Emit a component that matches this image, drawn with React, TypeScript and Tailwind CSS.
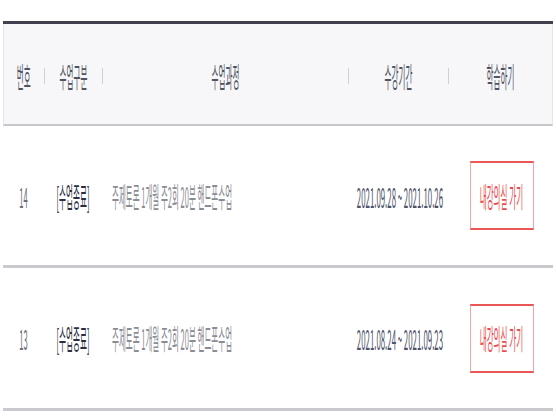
const rows = [
  { no: "14", period: "2021.09.28 ~ 2021.10.26" },
  { no: "13", period: "2021.08.24 ~ 2021.09.23" },
];

const font = "font-['Noto_Sans_CJK_KR','Noto_Sans',sans-serif]";

function Squish({ children, className = "" }: { children: React.ReactNode; className?: string }) {
  return (
    <span className={`inline-block whitespace-nowrap text-[28px] leading-none scale-x-[0.27] ${className}`}>
      {children}
    </span>
  );
}

export default function App() {
  return (
    <div className={`w-[556px] h-[416px] bg-white pt-[21px] px-[3px] overflow-hidden ${font}`}>
      <div className="border-t-[3px] border-[#40404f]">
        {/* header */}
        <div className="flex items-center h-[102px] pt-1 bg-[#f7f7fa] border-b-2 border-[#c8c8cc] border-x border-x-[#e6e6ea] text-[#4f5360]">
          <div className="w-[40px] flex justify-center"><Squish>번호</Squish></div>
          <div className="w-px h-4 bg-[#cfcfd4]" />
          <div className="w-[57px] flex justify-center"><Squish>수업구분</Squish></div>
          <div className="w-px h-4 bg-[#cfcfd4]" />
          <div className="w-[247px] flex justify-center"><Squish>수업과정</Squish></div>
          <div className="w-px h-4 bg-[#cfcfd4]" />
          <div className="w-[99px] flex justify-center"><Squish>수강기간</Squish></div>
          <div className="w-px h-4 bg-[#cfcfd4]" />
          <div className="flex-1 flex justify-center"><Squish>학습하기</Squish></div>
        </div>

        {rows.map((r, i) => (
          <div
            key={r.no}
            className={`flex items-center border-b-[3px] border-[#c9c9ce] ${i == 0 ? "h-[142px]" : "h-[143px]"}`}
          >
            <div className="w-[41px] flex justify-center">
              <Squish className="text-[#6a6e76]">{r.no}</Squish>
            </div>
            <div className="w-[58px] flex justify-center">
              <Squish className="text-[#2a2d40]">[수업종료]</Squish>
            </div>
            <div className="w-[248px] pl-[10px] flex">
              <Squish className="origin-left text-[#8a8c94] scale-x-[0.268]">주제토론 1개월 주2회 20분 핸드폰수업</Squish>
            </div>
            <div className="w-[100px] flex justify-center">
              <Squish className="text-[#4d5269] scale-x-[0.28]">{r.period}</Squish>
            </div>
            <div className="flex-1 flex justify-center">
              <button
                type="button"
                className="w-[64px] h-[69px] flex items-center justify-center border-y-2 border-y-[#eb5757] border-x border-x-[#f4a3a3] bg-white"
              >
                <Squish className="text-[#ea4b4b] text-[26px] scale-x-[0.26]">내강의실 가기</Squish>
              </button>
            </div>
          </div>
        ))}
      </div>
    </div>
  );
}
